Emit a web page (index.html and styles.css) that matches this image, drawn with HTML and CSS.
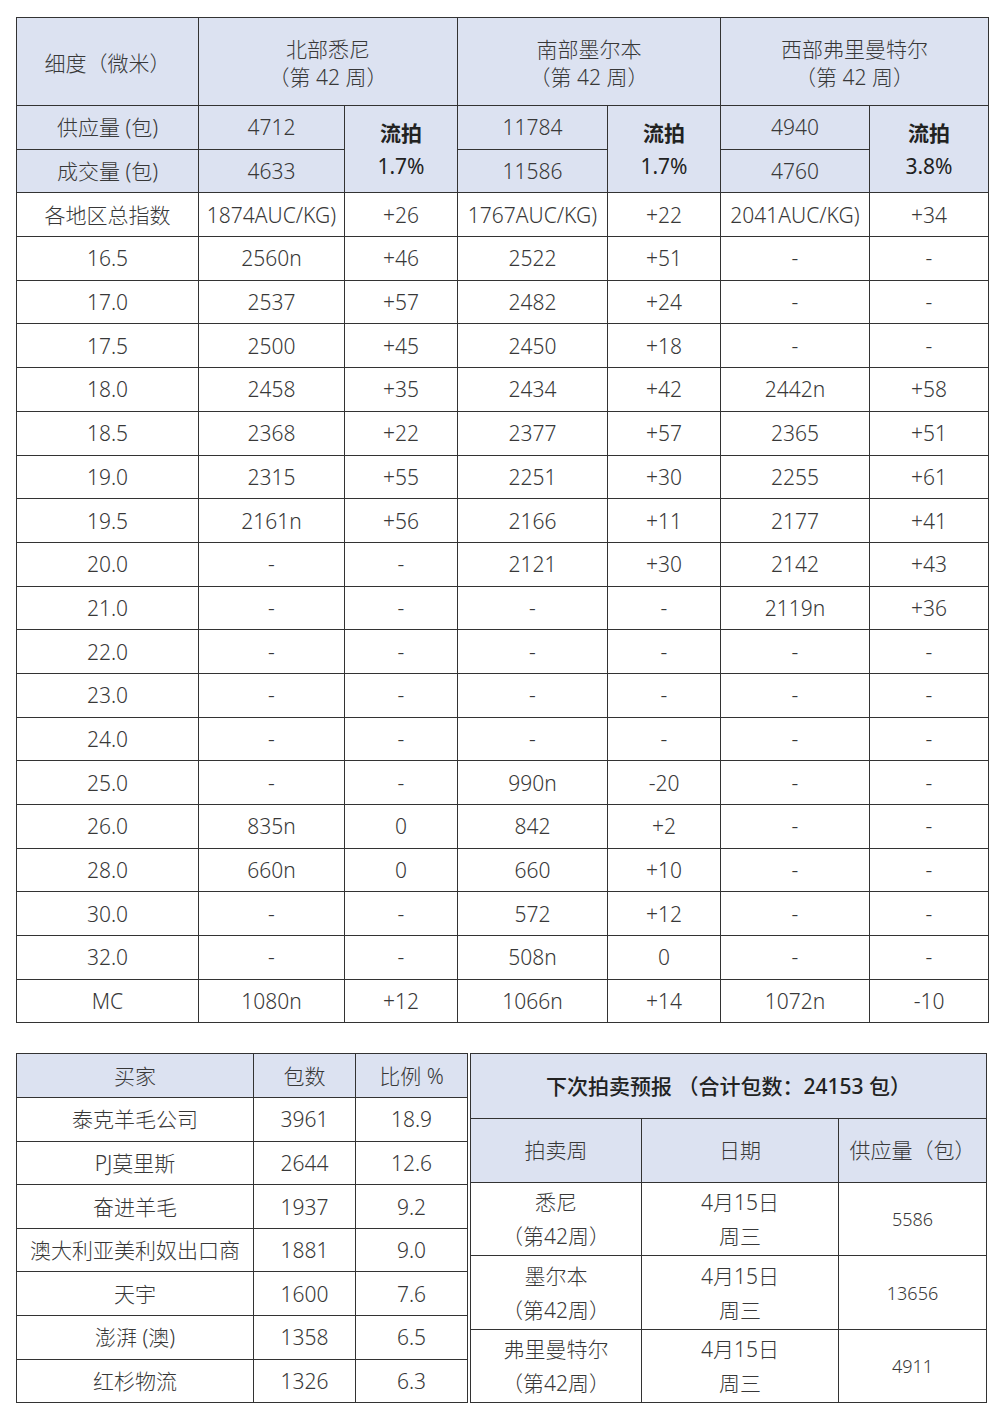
FILE: index.html
```html
<!DOCTYPE html>
<html lang="zh">
<head>
<meta charset="utf-8">
<link rel="stylesheet" href="styles.css">
</head>
<body>
<div class="page">
<table class="main">
  <colgroup>
    <col style="width:182px"><col style="width:146px"><col style="width:113px"><col style="width:150px"><col style="width:113px"><col style="width:149px"><col style="width:119px">
  </colgroup>
  <tr class="head">
    <td class="hd">细度（微米）</td>
    <td class="hd" colspan="2">北部悉尼<br>（第 42 周）</td>
    <td class="hd" colspan="2">南部墨尔本<br>（第 42 周）</td>
    <td class="hd" colspan="2">西部弗里曼特尔<br>（第 42 周）</td>
  </tr>
  <tr>
    <td class="hd">供应量 (包)</td>
    <td class="hd">4712</td>
    <td class="hd pass" rowspan="2"><b>流拍</b><br><span>1.7%</span></td>
    <td class="hd">11784</td>
    <td class="hd pass" rowspan="2"><b>流拍</b><br><span>1.7%</span></td>
    <td class="hd">4940</td>
    <td class="hd pass" rowspan="2"><b>流拍</b><br><span>3.8%</span></td>
  </tr>
  <tr>
    <td class="hd">成交量 (包)</td>
    <td class="hd">4633</td>
    <td class="hd">11586</td>
    <td class="hd">4760</td>
  </tr>
  <tr><td>各地区总指数</td><td>1874AUC/KG)</td><td>+26</td><td>1767AUC/KG)</td><td>+22</td><td>2041AUC/KG)</td><td>+34</td></tr>
  <tr><td>16.5</td><td>2560n</td><td>+46</td><td>2522</td><td>+51</td><td>-</td><td>-</td></tr>
  <tr><td>17.0</td><td>2537</td><td>+57</td><td>2482</td><td>+24</td><td>-</td><td>-</td></tr>
  <tr><td>17.5</td><td>2500</td><td>+45</td><td>2450</td><td>+18</td><td>-</td><td>-</td></tr>
  <tr><td>18.0</td><td>2458</td><td>+35</td><td>2434</td><td>+42</td><td>2442n</td><td>+58</td></tr>
  <tr><td>18.5</td><td>2368</td><td>+22</td><td>2377</td><td>+57</td><td>2365</td><td>+51</td></tr>
  <tr><td>19.0</td><td>2315</td><td>+55</td><td>2251</td><td>+30</td><td>2255</td><td>+61</td></tr>
  <tr><td>19.5</td><td>2161n</td><td>+56</td><td>2166</td><td>+11</td><td>2177</td><td>+41</td></tr>
  <tr><td>20.0</td><td>-</td><td>-</td><td>2121</td><td>+30</td><td>2142</td><td>+43</td></tr>
  <tr><td>21.0</td><td>-</td><td>-</td><td>-</td><td>-</td><td>2119n</td><td>+36</td></tr>
  <tr><td>22.0</td><td>-</td><td>-</td><td>-</td><td>-</td><td>-</td><td>-</td></tr>
  <tr><td>23.0</td><td>-</td><td>-</td><td>-</td><td>-</td><td>-</td><td>-</td></tr>
  <tr><td>24.0</td><td>-</td><td>-</td><td>-</td><td>-</td><td>-</td><td>-</td></tr>
  <tr><td>25.0</td><td>-</td><td>-</td><td>990n</td><td>-20</td><td>-</td><td>-</td></tr>
  <tr><td>26.0</td><td>835n</td><td>0</td><td>842</td><td>+2</td><td>-</td><td>-</td></tr>
  <tr><td>28.0</td><td>660n</td><td>0</td><td>660</td><td>+10</td><td>-</td><td>-</td></tr>
  <tr><td>30.0</td><td>-</td><td>-</td><td>572</td><td>+12</td><td>-</td><td>-</td></tr>
  <tr><td>32.0</td><td>-</td><td>-</td><td>508n</td><td>0</td><td>-</td><td>-</td></tr>
  <tr><td>MC</td><td>1080n</td><td>+12</td><td>1066n</td><td>+14</td><td>1072n</td><td>-10</td></tr>
</table>

<div class="bottom">
  <table class="buyers">
    <colgroup><col style="width:237px"><col style="width:102px"><col style="width:112px"></colgroup>
    <tr><td class="hd">买家</td><td class="hd">包数</td><td class="hd">比例 %</td></tr>
    <tr><td>泰克羊毛公司</td><td>3961</td><td>18.9</td></tr>
    <tr><td>PJ莫里斯</td><td>2644</td><td>12.6</td></tr>
    <tr><td>奋进羊毛</td><td>1937</td><td>9.2</td></tr>
    <tr><td>澳大利亚美利奴出口商</td><td>1881</td><td>9.0</td></tr>
    <tr><td>天宇</td><td>1600</td><td>7.6</td></tr>
    <tr><td>澎湃 (澳)</td><td>1358</td><td>6.5</td></tr>
    <tr><td>红杉物流</td><td>1326</td><td>6.3</td></tr>
  </table>
  <table class="forecast">
    <colgroup><col style="width:171px"><col style="width:197px"><col style="width:148px"></colgroup>
    <tr class="title"><td class="hd" colspan="3">下次拍卖预报 （合计包数：24153 包）</td></tr>
    <tr class="sub"><td class="hd">拍卖周</td><td class="hd">日期</td><td class="hd">供应量（包）</td></tr>
    <tr class="data"><td>悉尼<br>（第42周）</td><td>4月15日<br>周三</td><td class="num">5586</td></tr>
    <tr class="data"><td>墨尔本<br>（第42周）</td><td>4月15日<br>周三</td><td class="num">13656</td></tr>
    <tr class="data"><td>弗里曼特尔<br>（第42周）</td><td>4月15日<br>周三</td><td class="num">4911</td></tr>
  </table>
</div>
</div>
</body>
</html>
```

FILE: styles.css
```css
html, body {
  margin: 0;
  padding: 0;
  background: #ffffff;
}

body {
  font-family: "Noto Sans", "Noto Sans CJK SC", sans-serif;
  font-weight: 300;
  color: #383838;
}

.page {
  padding: 17px 0 0 16px;
}

table {
  border-collapse: collapse;
  table-layout: fixed;
}

td {
  border: 1.5px solid #333333;
  text-align: center;
  vertical-align: middle;
  padding: 0;
  font-size: 21px;
  line-height: 28px;
  white-space: nowrap;
}

.hd {
  background: #dce2f1;
}

.main {
  width: 972px;
}

.main tr td {
  height: 42.7px;
}

.main tr.head td {
  height: 85px;
  padding-top: 2px;
}

.main td.pass {
  line-height: 33px;
  padding-top: 2px;
}

.pass b {
  font-weight: 600;
  font-size: 21px;
  color: #222222;
}

.pass span {
  font-weight: 400;
  color: #222222;
}

.bottom {
  display: flex;
  gap: 2px;
  margin-top: 30px;
}

.buyers {
  width: 451px;
}

.buyers td {
  height: 42.6px;
}

.forecast {
  width: 516px;
}

.forecast .title td {
  height: 63px;
  font-weight: 500;
  color: #222222;
}

.forecast .sub td {
  height: 63px;
}

.forecast .data td {
  height: 72px;
  line-height: 34px;
}

.forecast .data td.num {
  font-size: 18px;
}
```
